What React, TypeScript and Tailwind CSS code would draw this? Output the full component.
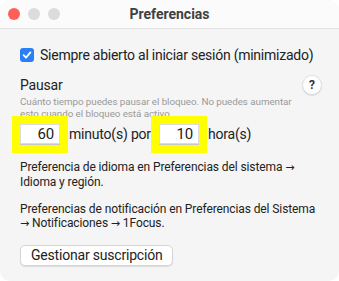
import React from 'react';

const font = { fontFamily: 'Roboto, "Liberation Sans", Arial, sans-serif' };

function Dot({ color }: { color: string }) {
  return <span className={`block w-[12px] h-[12px] rounded-full ${color}`} />;
}

function Arrow() {
  return <span className="font-['DejaVu_Sans',sans-serif] text-[11px]">→</span>;
}

function NumField({ value }: { value: string }) {
  return (
    <div className="bg-[#ffff00] p-[8px] pb-[9px]">
      <div className="w-[40px] h-[20px] bg-white border border-[#dcdcdc] shadow-[0_1px_0_#c8c8c8] text-right pr-[5px] text-[15px] leading-[19px] text-[#222]">
        {value}
      </div>
    </div>
  );
}

export default function App() {
  return (
    <div className="w-[339px] h-[281px] bg-white" style={font}>
      <div className="h-full rounded-[10px] overflow-hidden bg-[#f5f5f5] flex flex-col">
        <div className="h-[29px] bg-[#fbfbfb] border-b border-[#e2e2e2] grid grid-cols-[1fr_auto_1fr] items-center">
          <div className="flex gap-[8px] pl-[8px]">
            <Dot color="bg-[#fe5f57]" />
            <Dot color="bg-[#dcdcdc]" />
            <Dot color="bg-[#dcdcdc]" />
          </div>
          <div className="text-[14px] font-bold text-[#404040]">Preferencias</div>
          <div />
        </div>

        <div className="pl-[20px] pr-[17px] pt-[16px] text-[#222]">
          <label className="flex items-center gap-[6px] h-[20px]">
            <span className="w-[14px] h-[14px] rounded-[3px] bg-[#2a7ff6] flex items-center justify-center">
              <svg width="10" height="10" viewBox="0 0 10 10" fill="none">
                <path d="M1.6 5.2 L4 7.6 L8.4 2.4" stroke="white" strokeWidth="1.8" strokeLinecap="round" strokeLinejoin="round" />
              </svg>
            </span>
            <span className="text-[14px] tracking-[-0.25px] whitespace-nowrap">Siempre abierto al iniciar sesión (minimizado)</span>
          </label>

          <div className="mt-[10px] flex items-center justify-between h-[20px]">
            <span className="text-[14px] tracking-[-0.2px]">Pausar</span>
            <span className="w-[20px] h-[20px] rounded-full bg-white border border-[#e0e0e0] shadow-[0_1px_1px_rgba(0,0,0,0.12)] flex items-center justify-center text-[12px] font-bold text-[#333]">
              ?
            </span>
          </div>

          <p className="mt-[1px] text-[9.8px] leading-[12px] tracking-[-0.05px] text-[#9a9a9a] whitespace-nowrap">
            Cuánto tiempo puedes pausar el bloqueo. No puedes aumentar
            <br />
            esto cuando el bloqueo está activo.
          </p>

          <div className="-mt-[4px] -ml-[8px] flex items-center text-[14px] tracking-[-0.2px]">
            <NumField value="60" />
            <span className="ml-[1px]">minuto(s) por</span>
            <NumField value="10" />
            <span className="ml-[1px]">hora(s)</span>
          </div>

          <p className="mt-[7px] text-[12px] leading-[14px] tracking-[-0.1px] whitespace-nowrap">
            Preferencia de idioma en Preferencias del sistema <Arrow />
            <br />
            Idioma y región.
          </p>
          <p className="mt-[13px] text-[12px] leading-[14px] tracking-[-0.1px] whitespace-nowrap">
            Preferencias de notificación en Preferencias del Sistema
            <br />
            <Arrow /> Notificaciones <Arrow /> 1Focus.
          </p>

          <button className="mt-[14px] h-[21px] px-[10px] bg-white rounded-[5px] border border-[#d6d6d6] shadow-[0_1px_1px_rgba(0,0,0,0.1)] text-[14px] tracking-[-0.2px] leading-[19px] text-[#222]">
            Gestionar suscripción
          </button>
        </div>
      </div>
    </div>
  );
}
